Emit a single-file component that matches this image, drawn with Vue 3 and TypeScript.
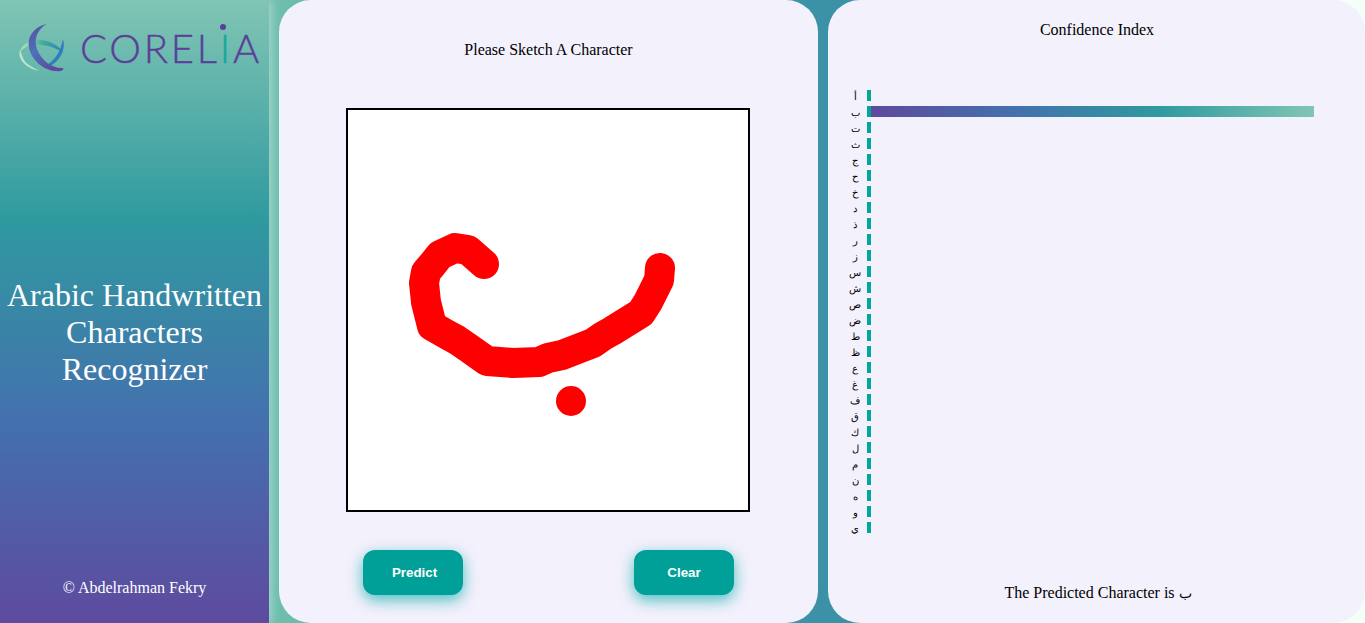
<script setup lang="ts">
const letters = ['أ','ب','ت','ث','ج','ح','خ','د','ذ','ر','ز','س','ش','ص','ض','ط','ظ','ع','غ','ف','ق','ك','ل','م','ن','ه','و','ي'];
const scores = letters.map((l) => (l === 'ب' ? 100 : 0));
</script>

<template>
  <div class="page">
    <aside class="sidebar">
      <div class="logo">
        <svg class="logo-mark" width="50" height="50" viewBox="0 0 50 50">
          <defs>
            <linearGradient id="ringG" x1="0" y1="0" x2="1" y2="0">
              <stop offset="0" stop-color="#b4e6bc" />
              <stop offset="0.55" stop-color="#3fa89c" />
              <stop offset="1" stop-color="#2f7fb8" />
            </linearGradient>
            <linearGradient id="crescentG" x1="0" y1="0" x2="0.6" y2="1">
              <stop offset="0" stop-color="#5e4a9e" />
              <stop offset="0.5" stop-color="#4c72ba" />
              <stop offset="1" stop-color="#5e4a9e" />
            </linearGradient>
          </defs>
          <path d="M3 30C5 22 14 17 24 18C34 19 42 24 47 31C40 27 32 23 24 23C14 22 7 25 3 30Z" fill="url(#ringG)" />
          <path d="M3 28C0 36 8 46 22 49C16 45 8 42 6 36C5 33 4 30 3 28Z" fill="#b4e6cc" />
          <path d="M46 17C49 27 44 39 30 46C28 47 26 45 28 44C37 39 43 31 46 17Z" fill="#2f7fb8" />
          <path d="M30 2C18 4 10 14 12 25C14 38 28 51 44 49C47 48 47 46 45 46C34 46 24 38 20 27C16 16 22 6 30 2Z" fill="url(#crescentG)" />
        </svg>
        <span class="logo-word">COREL<span class="logo-i">I</span>A</span>
        <i class="logo-dot"></i>
      </div>
      <h1 class="title">Arabic Handwritten Characters Recognizer</h1>
      <p class="credit">© Abdelrahman Fekry</p>
    </aside>

    <main class="content">
      <section class="panel sketch">
        <p class="prompt">Please Sketch A Character</p>
        <div class="canvas">
          <svg width="400" height="400" viewBox="0 0 400 400">
            <path class="stroke" d="M136 154L120 140L107 138L92 145L84 155L78 162L76 173L78 192L84 216L98 224L109 230L122 239L139 251L165 253L191 252L200 248L214 245L245 233L255 226L264 221L293 203L300 192L311 170L312 158" />
            <circle cx="223" cy="291" r="15" fill="#f00" />
          </svg>
        </div>
        <div class="actions">
          <button class="btn btn-predict">Predict</button>
          <button class="btn btn-clear">Clear</button>
        </div>
      </section>

      <section class="panel chart">
        <p class="chart-title">Confidence Index</p>
        <div class="rows">
          <div v-for="(l, i) in letters" :key="l" class="row">
            <span class="letter">{{ l }}</span>
            <div class="track">
              <div class="fill" :style="{ width: scores[i] + '%' }"></div>
            </div>
          </div>
        </div>
        <p class="result">The Predicted Character is <span class="result-char">ب</span></p>
      </section>
    </main>
  </div>
</template>

<style>
html,
body {
  margin: 0;
  padding: 0;
}
</style>

<style scoped>
.page {
  display: flex;
  width: 1365px;
  height: 623px;
  overflow: hidden;
  font-family: "Liberation Serif", "Times New Roman", serif;
  color: #000;
}

.sidebar {
  position: relative;
  z-index: 1;
  flex: 0 0 269px;
  display: flex;
  flex-direction: column;
  align-items: center;
  background: linear-gradient(180deg, #81c5b4 0%, #2f9a9f 35%, #4470ae 68%, #5e4a9e 100%);
  box-shadow: 3px 0 8px rgba(255, 255, 255, 0.35);
}

.logo {
  position: relative;
  display: flex;
  align-items: center;
  align-self: flex-start;
  margin: 24px 0 0 19px;
  height: 48px;
}

.logo-mark {
  flex: none;
  margin: -2px 0 0 -2px;
}

.logo-word {
  margin-left: 13px;
  font-family: Lato, "Noto Sans", sans-serif;
  font-size: 40px;
  font-weight: 300;
  letter-spacing: 2.75px;
  line-height: 48px;
  color: #5b3f98;
  -webkit-text-stroke: 0.4px currentColor;
}

.logo-i {
  color: #1aa79c;
}

.logo-dot {
  position: absolute;
  left: 201px;
  top: 0;
  width: 6px;
  height: 6px;
  border-radius: 50%;
  background: #5b3f98;
}

.title {
  margin: 205px 0 0;
  width: 260px;
  font-size: 32px;
  font-weight: 400;
  line-height: 37px;
  text-align: center;
  color: #fff;
}

.credit {
  margin: auto 0 26px;
  font-size: 16px;
  line-height: 18px;
  color: #fff;
}

.content {
  flex: 1;
  display: flex;
  gap: 10px;
  padding-left: 10px;
  background: linear-gradient(90deg, #6fbfae 0%, #3b92a7 50%, #3b92a7 97%, #f5fffa 97%);
}

.panel {
  display: flex;
  flex-direction: column;
  align-items: center;
  background: #f3f1fc;
  border-radius: 32px;
}

.sketch {
  flex: 0 0 539px;
}

.prompt {
  margin: 41px 0 0;
  font-size: 16px;
  line-height: 18px;
}

.canvas {
  margin: 49px 1px 0 0;
  width: 400px;
  height: 400px;
  border: 2px solid #000;
  background: #fff;
}

.canvas svg {
  display: block;
}

.stroke {
  fill: none;
  stroke: #f00;
  stroke-width: 30;
  stroke-linecap: round;
  stroke-linejoin: round;
}

.actions {
  display: flex;
  justify-content: space-between;
  width: 371px;
  margin-top: 38px;
}

.btn {
  width: 100px;
  height: 45px;
  border: 0;
  border-radius: 12px;
  background: #009f97;
  box-shadow: 0 5px 15px rgba(0, 170, 170, 0.7);
  font-family: "Liberation Sans", Arial, sans-serif;
  font-size: 13.33px;
  font-weight: 700;
  color: #fff;
}

.btn-predict {
  padding-left: 9px;
}

.btn-clear {
  padding-left: 6px;
}

.chart {
  flex: 1;
  align-items: stretch;
}

.chart-title {
  margin: 21px 0 0;
  padding-left: 1px;
  font-size: 16px;
  line-height: 18px;
  text-align: center;
}

.rows {
  display: flex;
  flex-direction: column;
  gap: 5px;
  margin: 51px 51px 0 0;
}

.row {
  display: flex;
  align-items: flex-start;
  height: 11px;
}

.letter {
  box-sizing: border-box;
  flex: 0 0 39px;
  padding: 1px 0 0 15px;
  font-size: 10px;
  line-height: 11px;
  text-align: center;
}

.track {
  flex: 1;
  height: 11px;
  padding-left: 4px;
  background: linear-gradient(#00a89b, #00a89b) left / 4px 100% no-repeat;
}

.fill {
  height: 100%;
  background: linear-gradient(90deg, #5e4a9e 0%, #4470ae 32%, #2f9a9f 65%, #81c5b4 100%);
}

.result {
  margin: auto 0 20px;
  padding-left: 3px;
  font-size: 16px;
  line-height: 18px;
  text-align: center;
}

.result-char {
  font-size: 14px;
}
</style>
